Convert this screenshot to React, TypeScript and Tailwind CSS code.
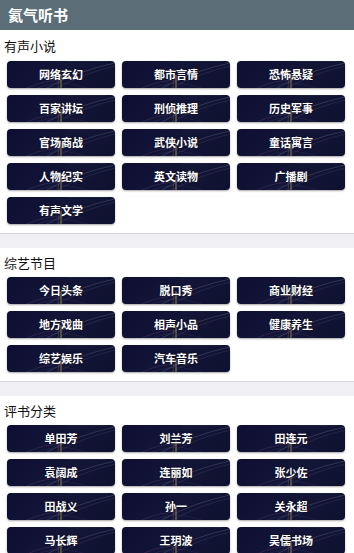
import React from "react";

const sections: { title: string; items: string[] }[] = [
  {
    title: "有声小说",
    items: ["网络玄幻", "都市言情", "恐怖悬疑", "百家讲坛", "刑侦推理", "历史军事", "官场商战", "武侠小说", "童话寓言", "人物纪实", "英文读物", "广播剧", "有声文学"],
  },
  {
    title: "综艺节目",
    items: ["今日头条", "脱口秀", "商业财经", "地方戏曲", "相声小品", "健康养生", "综艺娱乐", "汽车音乐"],
  },
  {
    title: "评书分类",
    items: ["单田芳", "刘兰芳", "田连元", "袁阔成", "连丽如", "张少佐", "田战义", "孙一", "关永超", "马长辉", "王玥波", "吴儒书场"],
  },
];

function Streaks() {
  return (
    <svg className="absolute inset-0 w-full h-full" viewBox="0 0 108 27" preserveAspectRatio="none">
      <path d="M40 27 Q70 10 108 2" stroke="#8890a8" strokeWidth="0.6" fill="none" opacity="0.45" />
      <path d="M50 27 Q78 12 108 5" stroke="#a0a0b8" strokeWidth="0.4" fill="none" opacity="0.35" />
      <path d="M60 0 L100 0" stroke="#9aa0b0" strokeWidth="0.5" opacity="0.3" />
      <path d="M54 14 L54 27" stroke="#d8b860" strokeWidth="0.8" opacity="0.8" />
      <path d="M52 18 L51 27" stroke="#c0a050" strokeWidth="0.4" opacity="0.5" />
      <path d="M20 27 Q40 18 54 20" stroke="#8a5a9a" strokeWidth="0.5" fill="none" opacity="0.45" />
      <path d="M30 27 Q45 22 56 22" stroke="#6a6aa0" strokeWidth="0.4" fill="none" opacity="0.35" />
      <path d="M56 22 Q70 24 80 27" stroke="#7a5a9a" strokeWidth="0.4" fill="none" opacity="0.35" />
    </svg>
  );
}

function Btn({ label }: { label: string }) {
  return (
    <div className="relative h-[27px] rounded-[4px] overflow-hidden bg-[#0f1034] bg-[linear-gradient(135deg,#0d0e32_0%,#141638_50%,#0f1130_100%)] shadow-[0_1px_2px_rgba(0,0,0,0.35)] flex items-center justify-center">
      <Streaks />
      <span className="relative text-white font-bold text-[11px] leading-none [text-shadow:0_0_2px_rgba(0,0,0,0.6)]">{label}</span>
    </div>
  );
}

export default function App() {
  return (
    <div className="w-[354px] h-[553px] overflow-hidden bg-white font-['Noto_Sans_CJK_SC','Noto_Sans',sans-serif]">
      <div className="h-[30px] bg-[#5b6e78] flex items-center px-[8px]">
        <span className="text-white font-bold text-[15px]">氦气听书</span>
      </div>
      {sections.map((s, i) => (
        <div key={s.title}>
          {i > 0 && <div className="h-[15px] bg-[#efeff4] border-t border-[#d6d6da]" />}
          <div className="bg-white pb-[9px]">
            <div className={`${i === 0 ? "h-[31px]" : "h-[29px]"} flex items-center px-[4px] text-[13px] text-[#111]`}>{s.title}</div>
            <div className="grid grid-cols-3 gap-x-[7px] gap-y-[7px] px-[7px] pr-[9px]">
              {s.items.map((it) => (
                <Btn key={it} label={it} />
              ))}
            </div>
          </div>
        </div>
      ))}
    </div>
  );
}
